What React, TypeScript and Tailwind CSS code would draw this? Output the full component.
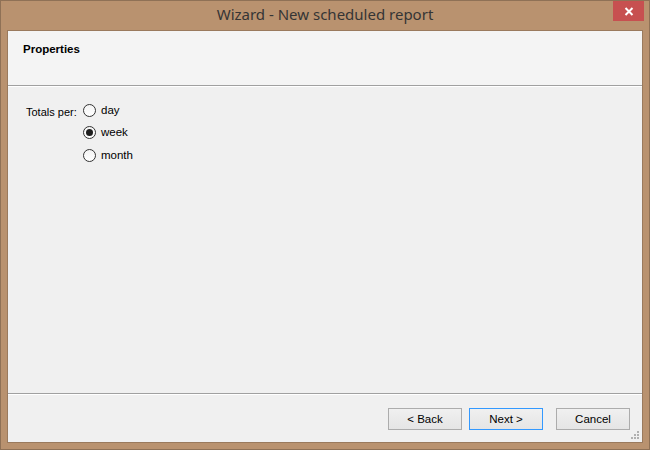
import { useState } from "react";

const opts = ["day", "week", "month"];

function Radio({ on }: { on: boolean }) {
  return (
    <span className="flex h-[13px] w-[13px] items-center justify-center rounded-full border border-[#333333] bg-gradient-to-b from-[#f4f4f4] to-white">
      {on && <span className="h-[7px] w-[7px] rounded-full bg-[#1e1e1e]" />}
    </span>
  );
}

function Btn({ label, cls }: { label: string; cls: string }) {
  return (
    <button
      className={
        "block h-[22px] w-[74px] border bg-gradient-to-b from-[#f0f0f0] to-[#e5e5e5] text-[11.5px] leading-[20px] text-black " +
        cls
      }
    >
      {label}
    </button>
  );
}

export default function App() {
  const [sel, setSel] = useState("week");

  return (
    <div
      className="flex h-[450px] w-[650px] flex-col border border-[#8f7156] bg-[#b9926f]"
      style={{ fontFamily: "'Liberation Sans', Arial, sans-serif" }}
    >
      {/* title bar */}
      <div className="relative flex h-[29px] items-start justify-center">
        <span
          className="pt-[3px] text-[15px] leading-[20px] text-[#353535]"
          style={{ fontFamily: "'Noto Sans', 'Open Sans', sans-serif" }}
        >
          Wizard - New scheduled report
        </span>
        <div className="absolute right-[5px] top-0 flex h-[20px] w-[31px] items-center justify-center bg-[#c75050]">
          <svg width="10" height="9" viewBox="0 0 10 9">
            <path d="M1.5 1 L8.5 8 M8.5 1 L1.5 8" stroke="white" strokeWidth="2" />
          </svg>
        </div>
      </div>

      {/* client */}
      <div className="mx-[6px] mb-[6px] flex flex-1 flex-col border border-[#9a7a5d] bg-[#f0f0f0]">
        <div className="h-[55px] border-b border-[#a0a0a0] bg-[#f4f4f4] pl-[15px] pt-[12px]">
          <span className="block text-[11.5px] font-bold leading-[13px] text-black">Properties</span>
        </div>
        <div className="h-px bg-white" />

        <div className="flex flex-1 pl-[18px] pt-[12px] text-[11px] text-black">
          <span className="mt-[5px] w-[57px]">Totals per:</span>
          <div className="flex flex-col">
            {opts.map((o) => (
              <label
                key={o}
                onClick={() => setSel(o)}
                className="flex h-[22.5px] cursor-default items-center gap-[5px]"
              >
                <Radio on={sel === o} />
                <span className="text-[11.5px]">{o}</span>
              </label>
            ))}
          </div>
        </div>

        <div className="h-px bg-[#a0a0a0]" />
        <div className="h-px bg-white" />
        <div className="relative flex h-[47px] items-start justify-end pr-[12px] pt-[13px]">
          <Btn label="< Back" cls="border-[#acacac]" />
          <Btn label="Next >" cls="ml-[7px] border-[#3399ff]" />
          <Btn label="Cancel" cls="ml-[13px] border-[#acacac]" />
          <svg className="absolute bottom-[2px] right-[2px]" width="9" height="9" viewBox="0 0 9 9">
            <rect x="6" y="0" width="2" height="2" fill="#b0b0b0" />
            <rect x="3" y="3" width="2" height="2" fill="#b0b0b0" />
            <rect x="6" y="3" width="2" height="2" fill="#b0b0b0" />
            <rect x="0" y="6" width="2" height="2" fill="#b0b0b0" />
            <rect x="3" y="6" width="2" height="2" fill="#b0b0b0" />
            <rect x="6" y="6" width="2" height="2" fill="#b0b0b0" />
          </svg>
        </div>
      </div>
    </div>
  );
}
